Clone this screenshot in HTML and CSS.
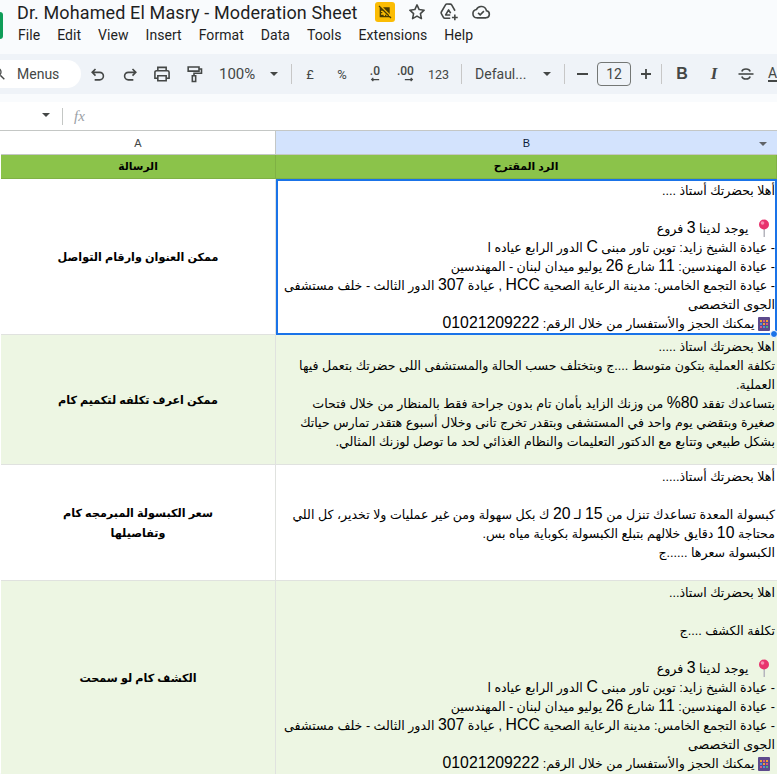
FILE: index.html
```html
<!DOCTYPE html>
<html lang="en">
<head>
    <meta charset="UTF-8">
    <meta name="viewport" content="width=device-width, initial-scale=1.0">
    <title>Dr. Mohamed El Masry - Moderation Sheet</title>
    <link rel="stylesheet" href="styles.css">
</head>
<body>
    <header class="top-bar">
        <div class="logo"></div>
        <div class="doc-info">
            <div class="title-row">
                <span class="doc-title">Dr. Mohamed El Masry - Moderation Sheet</span>
                <span class="badge">
                    <svg viewBox="0 0 24 24" width="16" height="16"><path d="M3 3l18 18M5 5v14h14M5 9h3M5 13h3M5 17h3M9 19v-3M13 19v-3M17 19v-3" fill="none" stroke="#4a3b00" stroke-width="2"/><path d="M9 5l10 10V5z" fill="#4a3b00"/></svg>
                </span>
                <svg class="title-icon" viewBox="0 0 24 24"><path d="M12 3.500l2.600 5.600 6 .7-4.500 4.100 1.200 6L12 17l-5.300 2.900 1.200-6L3.400 9.800l6-.7z" fill="none" stroke="#444746" stroke-width="1.900" stroke-linejoin="round"/></svg>
                <svg class="title-icon" viewBox="0 0 24 24"><path d="M13.500 19.500H7a2 2 0 0 1-1.700-1L2.800 14a2 2 0 0 1 0-2l5-8.500a2 2 0 0 1 1.700-1h4a2 2 0 0 1 1.700 1l4 7" fill="none" stroke="#444746" stroke-width="1.900" stroke-linejoin="round"/><path d="M13.500 15.500H8l3.500-6 2.500 4" fill="none" stroke="#444746" stroke-width="1.900" stroke-linejoin="round"/><path d="M19 15v7M15.500 18.500h7" stroke="#444746" stroke-width="1.900"/></svg>
                <svg class="title-icon" viewBox="0 0 24 24"><path d="M7 19a5 5 0 0 1-.6-9.900 6.500 6.500 0 0 1 12.200 1.400A4.300 4.300 0 0 1 18 19z" fill="none" stroke="#444746" stroke-width="1.900"/><path d="M8.500 13l2.500 2.500 4.500-4.500" fill="none" stroke="#444746" stroke-width="1.900"/></svg>
            </div>
            <nav class="menu-row">
                <span>File</span><span>Edit</span><span>View</span><span>Insert</span><span>Format</span><span>Data</span><span>Tools</span><span>Extensions</span><span>Help</span>
            </nav>
        </div>
    </header>

    <div class="toolbar">
        <div class="search-pill">
            <svg class="search-icon" viewBox="0 0 24 24"><circle cx="9" cy="9" r="6" fill="none" stroke="#444746" stroke-width="2"/><path d="M14 14l6 6" stroke="#444746" stroke-width="2"/></svg>
            <span>Menus</span>
        </div>
        <div class="tools">
            <svg class="tool" viewBox="0 0 24 24"><path d="M9 6L5 10l4 4M5 10h9a4.500 4.500 0 0 1 0 9H8" fill="none" stroke="#444746" stroke-width="1.900"/></svg>
            <svg class="tool" viewBox="0 0 24 24"><path d="M15 6l4 4-4 4M19 10h-9a4.500 4.500 0 0 0 0 9h6" fill="none" stroke="#444746" stroke-width="1.900"/></svg>
            <svg class="tool" viewBox="0 0 24 24"><path d="M7 8V4h10v4M7 17H3.500v-7a2 2 0 0 1 2-2h13a2 2 0 0 1 2 2v7H17M7 14h10v6H7z" fill="none" stroke="#444746" stroke-width="1.900"/></svg>
            <svg class="tool" viewBox="0 0 24 24"><path d="M5 3.500h13v5H5zM18 6h3v5h-9v3M10 14h4v7h-4z" fill="none" stroke="#444746" stroke-width="1.900"/></svg>
            <span class="tool-text zoom-value">100%</span><span class="caret"></span>
            <span class="sep"></span>
            <span class="tool-text pound">£</span>
            <span class="tool-text percent">%</span>
            <span class="tool-text dec">.0<svg viewBox="0 0 12 6" width="10" height="5"><path d="M11 3H2M4 1L2 3l2 2" fill="none" stroke="#444746" stroke-width="1.500"/></svg></span>
            <span class="tool-text dec">.00<svg viewBox="0 0 12 6" width="10" height="5"><path d="M1 3h9M8 1l2 2-2 2" fill="none" stroke="#444746" stroke-width="1.500"/></svg></span>
            <span class="tool-text num">123</span>
            <span class="sep"></span>
            <span class="tool-text font-name">Defaul...</span><span class="caret"></span>
            <span class="sep"></span>
            <span class="minus"></span>
            <span class="size-box">12</span>
            <svg class="plus" viewBox="0 0 12 12"><path d="M6 1v10M1 6h10" stroke="#444746" stroke-width="1.800"/></svg>
            <span class="sep"></span>
            <span class="fmt fmt-b">B</span>
            <span class="fmt fmt-i">I</span>
            <svg class="tool strike" viewBox="0 0 24 24"><path d="M7 9c1-4 9-4 10 0M7 15c1 4 9 4 10 0" fill="none" stroke="#444746" stroke-width="1.900"/><path d="M3 12h18" stroke="#444746" stroke-width="1.900"/></svg>
            <span class="fmt-a">A</span>
        </div>
    </div>

    <div class="formula-bar">
        <span class="caret name-caret"></span>
        <span class="formula-sep"></span>
        <span class="fx">fx</span>
    </div>

    <main class="sheet">
        <div class="col-head">A</div>
        <div class="col-head col-selected">B<span class="caret col-caret"></span></div>

        <div class="cell head-cell" dir="rtl">الرسالة</div>
        <div class="cell head-cell" dir="rtl">الرد المقترح</div>

        <div class="cell question" dir="rtl">ممكن العنوان وارقام التواصل</div>
        <div class="cell answer selected" dir="rtl">أهلا بحضرتك أستاذ ....<br><br><svg class="emoji pin" viewBox="0 0 14 18"><path d="M6.500 9v9h1.500V9z" fill="#b5b5bd"/><circle cx="7" cy="5.500" r="5" fill="#e8336d"/><circle cx="5.500" cy="4" r="1.800" fill="#f98bb0"/></svg> يوجد لدينا <span class="lat">3</span> فروع<br>- عيادة الشيخ زايد: توين تاور مبنى <span class="lat">C</span> الدور الرابع عياده ا<br>- عيادة المهندسين: <span class="lat">11</span> شارع <span class="lat">26</span> يوليو ميدان لبنان - المهندسين<br>- عيادة التجمع الخامس: مدينة الرعاية الصحية <span class="lat">HCC</span> , عيادة <span class="lat">307</span> الدور الثالث - خلف مستشفى<br>الجوى التخصصى<br><svg class="emoji abacus" viewBox="0 0 12 14"><rect width="12" height="14" rx="1" fill="#5d4a8c"/><path d="M2 3h2v2H2z" fill="#f0a030"/><path d="M5 3h2v2H5z" fill="#e05a80"/><path d="M8 3h2v2H8z" fill="#f0a030"/><path d="M2 6h2v2H2z" fill="#4f8fe0"/><path d="M5 6h2v2H5z" fill="#f0a030"/><path d="M8 6h2v2H8z" fill="#e05a80"/><path d="M2 9h2v2H2z" fill="#e05a80"/><path d="M5 9h2v2H5z" fill="#4f8fe0"/><path d="M8 9h2v2H8z" fill="#4fb080"/></svg> يمكنك الحجز والأستفسار من خلال الرقم: <span class="lat">01021209222</span></div>

        <div class="cell question tint" dir="rtl">ممكن اعرف تكلفه لتكميم كام</div>
        <div class="cell answer tint" dir="rtl">اهلا بحضرتك استاذ .....<br>تكلفة العملية بتكون متوسط ....ج وبتختلف حسب الحالة والمستشفى اللى حضرتك بتعمل فيها<br>العملية.<br>بتساعدك تفقد <span class="lat">80%</span> من وزنك الزايد بأمان تام بدون جراحة فقط بالمنظار من خلال فتحات<br>صغيرة وبتقضي يوم واحد في المستشفى وبتقدر تخرج تانى وخلال أسبوع هتقدر تمارس حياتك<br>بشكل طبيعي وتتابع مع الدكتور التعليمات والنظام الغذائي لحد ما توصل لوزنك المثالي.</div>

        <div class="cell question" dir="rtl">سعر الكبسولة المبرمجه كام وتفاصيلها</div>
        <div class="cell answer" dir="rtl">أهلا بحضرتك أستاذ.....<br><br>كبسولة المعدة تساعدك تنزل من <span class="lat">15</span> لـ <span class="lat">20</span> ك بكل سهولة ومن غير عمليات ولا تخدير، كل اللي<br>محتاجة <span class="lat">10</span> دقايق خلالهم بتبلع الكبسولة بكوباية مياه بس.<br>الكبسولة سعرها ......ج</div>

        <div class="cell question tint" dir="rtl">الكشف كام لو سمحت</div>
        <div class="cell answer tint" dir="rtl">اهلا بحضرتك استاذ...<br><br>تكلفة الكشف ....ج<br><br><svg class="emoji pin" viewBox="0 0 14 18"><path d="M6.500 9v9h1.500V9z" fill="#b5b5bd"/><circle cx="7" cy="5.500" r="5" fill="#e8336d"/><circle cx="5.500" cy="4" r="1.800" fill="#f98bb0"/></svg> يوجد لدينا <span class="lat">3</span> فروع<br>- عيادة الشيخ زايد: توين تاور مبنى <span class="lat">C</span> الدور الرابع عياده ا<br>- عيادة المهندسين: <span class="lat">11</span> شارع <span class="lat">26</span> يوليو ميدان لبنان - المهندسين<br>- عيادة التجمع الخامس: مدينة الرعاية الصحية <span class="lat">HCC</span> , عيادة <span class="lat">307</span> الدور الثالث - خلف مستشفى<br>الجوى التخصصى<br><svg class="emoji abacus" viewBox="0 0 12 14"><rect width="12" height="14" rx="1" fill="#5d4a8c"/><path d="M2 3h2v2H2z" fill="#f0a030"/><path d="M5 3h2v2H5z" fill="#e05a80"/><path d="M8 3h2v2H8z" fill="#f0a030"/><path d="M2 6h2v2H2z" fill="#4f8fe0"/><path d="M5 6h2v2H5z" fill="#f0a030"/><path d="M8 6h2v2H8z" fill="#e05a80"/><path d="M2 9h2v2H2z" fill="#e05a80"/><path d="M5 9h2v2H5z" fill="#4f8fe0"/><path d="M8 9h2v2H8z" fill="#4fb080"/></svg> يمكنك الحجز والأستفسار من خلال الرقم: <span class="lat">01021209222</span></div>
    </main>
</body>
</html>
```

FILE: styles.css
```css
:root {
    --page-bg: #f9fbfd;
    --bar-bg: #eff3f8;
    --icon: #444746;
    --grid: #e0e2df;
    --grid-dark: #c4c7c5;
    --green: #8bc34a;
    --tint: #edf6e3;
    --blue: #1a73e8;
}

html, body {
    height: 774px;
    overflow: hidden;
}
body {
    margin: 0;
    background-color: var(--page-bg);
    color: #000;
    font-family: Roboto, Arial, sans-serif;
}

/* title + menus */
.top-bar {
    display: flex;
    height: 54px;
}
.logo {
    width: 3px;
    height: 27px;
    margin-top: 12px;
    background-color: #0f9d58;
    border-radius: 0 3px 3px 0;
}
.doc-info {
    margin-left: 14px;
}
.title-row {
    display: flex;
    align-items: center;
    height: 24px;
}
.doc-title {
    font-size: 18px;
    color: #1f1f1f;
    width: 358px;
    white-space: nowrap;
    letter-spacing: 0.12px;
}
.badge {
    display: flex;
    align-items: center;
    justify-content: center;
    width: 20px;
    height: 20px;
    background-color: #fbbc04;
    border-radius: 3px;
    margin-right: 12px;
}
.title-icon {
    width: 20px;
    height: 20px;
    margin-right: 12px;
}
.menu-row {
    display: flex;
    gap: 17px;
    padding-left: 1px;
    font-size: 14px;
    line-height: 22px;
    letter-spacing: 0.05px;
    color: #1f1f1f;
}

/* toolbar */
.toolbar {
    display: flex;
    align-items: center;
    height: 40px;
    background-color: var(--bar-bg);
    overflow: hidden;
    white-space: nowrap;
}
.search-pill {
    flex: none;
    display: flex;
    align-items: center;
    width: 81px;
    height: 28px;
    background-color: #fff;
    border-radius: 0 14px 14px 0;
    font-size: 14px;
    color: #444746;
    box-sizing: border-box;
    padding-left: 17px;
    position: relative;
}
.search-icon {
    position: absolute;
    left: -9px;
    top: 6px;
    width: 16px;
    height: 16px;
}
.tools {
    flex: none;
    display: flex;
    align-items: center;
    color: var(--icon);
    margin-left: 1px;
}
.tool {
    width: 20px;
    height: 20px;
    margin: 0 6px;
    flex: none;
}
.tool-text {
    font-size: 14px;
}
.zoom-value {
    margin-left: 9px;
    font-size: 15px;
}
.caret {
    display: inline-block;
    width: 0;
    height: 0;
    border-left: 4px solid transparent;
    border-right: 4px solid transparent;
    border-top: 4px solid var(--icon);
}
.zoom-value + .caret {
    margin-left: 15px;
}
.sep {
    width: 1px;
    height: 20px;
    background-color: #c7c7c7;
    margin: 0 14px 0 13px;
}
.pound {
    font-size: 13px;
    width: 10px;
}
.percent {
    font-size: 13px;
    margin-left: 21px;
}
.dec {
    display: flex;
    flex-direction: column;
    align-items: flex-end;
    font-size: 12px;
    font-weight: 500;
    line-height: 11px;
    margin-left: 23px;
}
.dec + .dec {
    margin-left: 17px;
}
.num {
    font-size: 12.500px;
    margin-left: 14px;
    margin-right: -1px;
}
.font-name {
    font-size: 14px;
    width: 66px;
    margin-left: -1px;
}
.font-name + .caret {
    margin-left: 2px;
}
.minus {
    width: 11px;
    height: 2px;
    background-color: var(--icon);
    margin-left: -2px;
}
.size-box {
    box-sizing: border-box;
    width: 34px;
    height: 24px;
    line-height: 22px;
    margin-left: 9px;
    border: 1px solid #747775;
    border-radius: 4px;
    text-align: center;
    font-size: 14px;
}
.plus {
    width: 12px;
    height: 12px;
    margin-left: 9px;
}
.tools .plus + .sep {
    margin-left: 9px;
}
.fmt {
    width: 20px;
    text-align: center;
    font-size: 16px;
    margin-right: 12px;
}
.fmt-b {
    font-family: "Liberation Sans", Arial, sans-serif;
    font-weight: bold;
    margin-left: -4px;
}
.fmt-i {
    font-family: "Liberation Serif", serif;
    font-style: italic;
    font-weight: bold;
    font-size: 17px;
}
.strike {
    margin: 0 12px 0 0;
}
.fmt-a {
    font-size: 14px;
    border-bottom: 2px solid var(--icon);
    line-height: 14px;
}

/* formula bar */
.formula-bar {
    display: flex;
    align-items: center;
    height: 28px;
    margin-top: 8px;
    background-color: #fff;
}
.name-caret {
    margin-left: 42px;
    margin-bottom: 2px;
}
.formula-sep {
    width: 1px;
    height: 17px;
    background-color: var(--grid-dark);
    margin-left: 12px;
}
.fx {
    font-family: "Liberation Serif", serif;
    font-style: italic;
    font-size: 15px;
    color: #9aa0a6;
    margin-left: 11px;
}

/* grid */
.sheet {
    display: grid;
    grid-template-columns: 275px minmax(0, 1fr);
    grid-template-rows: 24px 24px 156px 130px 116px 194px;
    padding-left: 1px;
    background-color: #fff;
    border-top: 1px solid var(--grid-dark);
    height: 643px;
    box-sizing: border-box;
}
.col-head {
    position: relative;
    display: flex;
    align-items: center;
    justify-content: center;
    font-family: "Liberation Sans", Arial, sans-serif;
    font-size: 11px;
    color: #444746;
    border-right: 1px solid var(--grid-dark);
    border-bottom: 1px solid var(--grid-dark);
    box-sizing: border-box;
}
.col-selected {
    background-color: #d3e3fd;
    color: #0b1a3a;
    border-right: 0;
}
.col-caret {
    position: absolute;
    right: 10px;
    top: 11px;
    border-top-color: #5f6368;
}
.cell {
    box-sizing: border-box;
    font-family: "Liberation Sans", "DejaVu Sans", Arial, sans-serif;
    border-bottom: 1px solid var(--grid);
    border-right: 1px solid var(--grid);
}
.head-cell {
    display: flex;
    align-items: center;
    justify-content: center;
    background-color: var(--green);
    font-size: 10.800px;
    font-weight: bold;
    border-color: #7fb144;
}
.question {
    display: flex;
    align-items: center;
    justify-content: center;
    padding: 0 40px;
    text-align: center;
    font-size: 11.200px;
    font-weight: bold;
    line-height: 20px;
}
.answer {
    padding: 3px 2px 0 0;
    font-size: 12.600px;
    line-height: 19px;
    border-right: 0;
    overflow: hidden;
    white-space: nowrap;
}
.lat {
    font-size: 15.800px;
    line-height: 1;
}
.tint {
    background-color: var(--tint);
}
.selected {
    position: relative;
    outline: 2px solid var(--blue);
    outline-offset: -2px;
    overflow: visible;
}
.selected::after {
    content: "";
    position: absolute;
    right: -1px;
    bottom: -4px;
    width: 6px;
    height: 6px;
    border-radius: 50%;
    background-color: var(--blue);
    border: 1px solid #fff;
}
.emoji {
    display: inline-block;
    vertical-align: -3px;
}
.pin {
    width: 14px;
    height: 18px;
    margin: -3px 4px 0 5px;
    vertical-align: -4px;
}
.abacus {
    width: 12px;
    height: 14px;
    margin: 0 5px 0 0;
}
```
